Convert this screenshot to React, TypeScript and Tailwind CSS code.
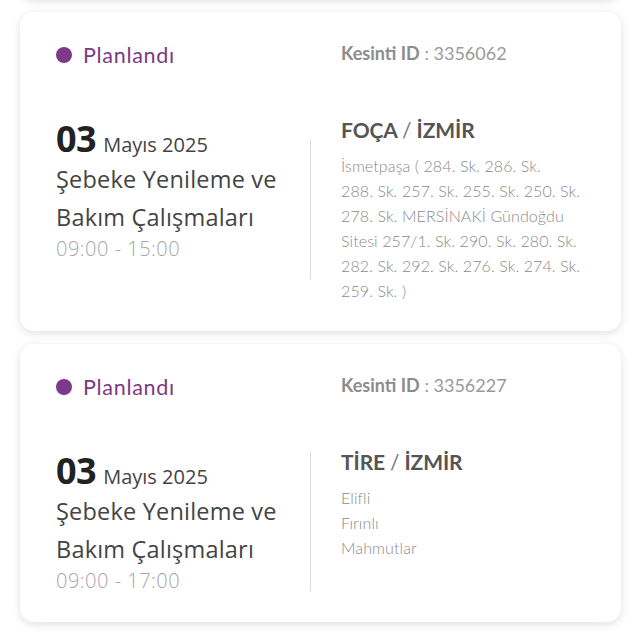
import React from "react";

type Item = {
  id: string;
  time: string;
  place: string;
  city: string;
  addr: string[];
};

const items: Item[] = [
  {
    id: "3356062",
    time: "09:00 - 15:00",
    place: "FOÇA",
    city: "İZMİR",
    addr: [
      "İsmetpaşa ( 284. Sk. 286. Sk.",
      "288. Sk. 257. Sk. 255. Sk. 250. Sk.",
      "278. Sk. MERSİNAKİ Gündoğdu",
      "Sitesi 257/1. Sk. 290. Sk. 280. Sk.",
      "282. Sk. 292. Sk. 276. Sk. 274. Sk.",
      "259. Sk. )",
    ],
  },
  {
    id: "3356227",
    time: "09:00 - 17:00",
    place: "TİRE",
    city: "İZMİR",
    addr: ["Elifli", "Fırınlı", "Mahmutlar"],
  },
];

function Card({ it }: { it: Item }) {
  return (
    <div className="ml-[20px] mr-[13px] rounded-[14px] bg-white shadow-[0_2px_9px_rgba(0,0,0,0.13)] pl-[36px] pr-[30px] pt-[29px] pb-[28px]">
      <div className="flex items-center h-[28px]">
        <div className="w-[285px] flex items-center gap-[11px]">
          <span className="w-[16px] h-[16px] rounded-full bg-[#7e3a8a] shrink-0" />
          <span className="font-['Lato',sans-serif] text-[21.5px] tracking-[0.7px] text-[#7b3a82] leading-[28px]">
            Planlandı
          </span>
        </div>
        <div className="font-['Lato',sans-serif] text-[18px] leading-[28px] text-[#999] -mt-[4px]">
          <span className="font-bold text-[#8c8c8c]">Kesinti ID</span> : {it.id}
        </div>
      </div>
      <div className="flex items-start mt-[47px]">
        <div className="w-[254px] shrink-0 font-['Open_Sans',sans-serif]">
          <div className="flex items-baseline gap-[7px] h-[44px] pt-[1px]">
            <span className="text-[36px] font-bold text-[#222] leading-[44px] tracking-[-0.5px]">03</span>
            <span className="text-[20px] text-[#444] leading-[44px]">Mayıs 2025</span>
          </div>
          <div className="text-[23.5px] leading-[38px] text-[#444] tracking-[0.2px]">
            Şebeke Yenileme ve Bakım Çalışmaları
          </div>
          <div className="text-[20px] leading-[26px] text-[#a6a6a6] font-light tracking-[0.5px]">{it.time}</div>
        </div>
        <div className="w-px h-[139px] self-center bg-[#dcdcdc] shrink-0" />
        <div className="pl-[30px] flex-1 font-['Lato',sans-serif]">
          <div className="text-[21px] font-bold leading-[28px] text-[#555] tracking-[-0.1px]">
            {it.place} <span className="font-normal text-[#777]">/</span> {it.city}
          </div>
          <div className="mt-[9px] text-[16px] tracking-[0.1px] leading-[25px] text-[#8a8a8a] font-light">
            {it.addr.map((a, i) => (
              <div key={i} className="whitespace-nowrap">{a}</div>
            ))}
          </div>
        </div>
      </div>
    </div>
  );
}

export default function App() {
  return (
    <div className="min-h-[633px] bg-white overflow-hidden">
      <div className="flex flex-col gap-[13px]">
        <div className="ml-[20px] mr-[13px] h-[30px] -mt-[31px] rounded-[14px] bg-white shadow-[0_2px_9px_rgba(0,0,0,0.13)]" />
        {items.map((it) => (
          <Card key={it.id} it={it} />
        ))}
      </div>
    </div>
  );
}
